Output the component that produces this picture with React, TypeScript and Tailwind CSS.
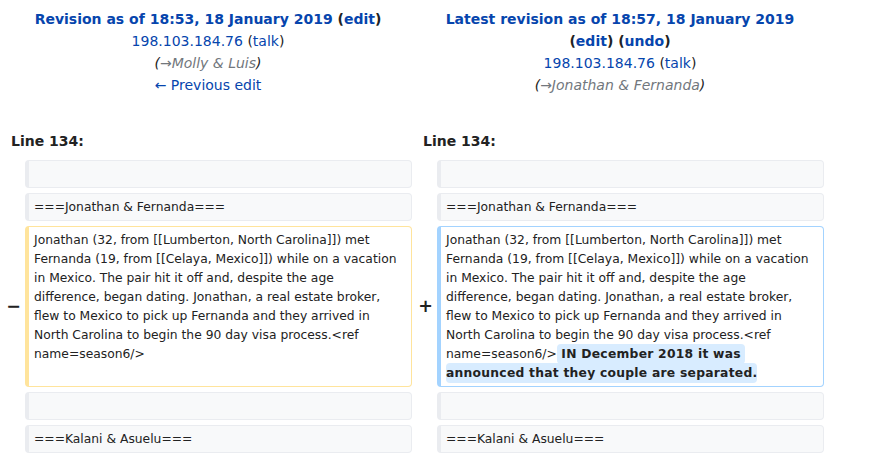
import React from 'react';

const link = 'text-[#0645ad]';

function Box({ kind, lines }: { kind: 'ctx' | 'del' | 'add'; lines: React.ReactNode[] }) {
    const styles: Record<string, string> = {
        ctx: 'bg-[#f8f9fa] border-[#eaecf0]',
        del: 'bg-white border-[#ffe49c]',
        add: 'bg-white border-[#a3d3ff]',
    };
    return (
        <div className={`border border-l-4 rounded-[4px] px-[5px] py-[3.5px] text-[12.32px] leading-[19px] text-[#222] whitespace-pre ${styles[kind]}`}>
            {lines.map((l, i) => (
                <div key={i} className="h-[19px]">{l}</div>
            ))}
        </div>
    );
}

const oldLines = [
    'Jonathan (32, from [[Lumberton, North Carolina]]) met',
    'Fernanda (19, from [[Celaya, Mexico]]) while on a vacation',
    'in Mexico. The pair hit it off and, despite the age',
    'difference, began dating. Jonathan, a real estate broker,',
    'flew to Mexico to pick up Fernanda and they arrived in',
    'North Carolina to begin the 90 day visa process.<ref',
    'name=season6/>',
];

const change = 'font-bold tracking-[0.25px] bg-[#d8ecff] rounded-[4px] py-[3px]';

const newLines: React.ReactNode[] = [
    ...oldLines.slice(0, 6),
    <>{'name=season6/>'}<span className={change}> IN December 2018 it was </span></>,
    <span className={change}>announced that they couple are separated.</span>,
];

export default function App() {
    return (
        <div className="w-[828px] text-[14px] text-[#222]" style={{ fontFamily: '"DejaVu Sans", sans-serif' }}>
            <div className="grid grid-cols-2 gap-x-[4px] px-[4px] pt-[8px] leading-[22px] text-center">
                <div>
                    <div className="font-bold">
                        <span className={link}>Revision as of 18:53, 18 January 2019</span> (<span className={link}>edit</span>)
                    </div>
                    <div>
                        <span className={link}>198.103.184.76</span> (<span className={link}>talk</span>)
                    </div>
                    <div className="italic">
                        (<span className="text-[#72777d]">→Molly &amp; Luis</span>)
                    </div>
                    <div className={link}>← Previous edit</div>
                </div>
                <div>
                    <div className="font-bold">
                        <span className={link}>Latest revision as of 18:57, 18 January 2019</span>
                    </div>
                    <div className="font-bold">
                        (<span className={link}>edit</span>) (<span className={link}>undo</span>)
                    </div>
                    <div>
                        <span className={link}>198.103.184.76</span> (<span className={link}>talk</span>)
                    </div>
                    <div className="italic">
                        (<span className="text-[#72777d]">→Jonathan &amp; Fernanda</span>)
                    </div>
                </div>
            </div>

            <div className="grid grid-cols-2 gap-x-[4px] px-[4px] mt-[34px] leading-[22px] font-bold">
                <div className="pl-[7px]">Line 134:</div>
                <div className="pl-[7px]">Line 134:</div>
            </div>

            <div className="grid grid-cols-[17px_387px_17px_387px] gap-x-[4px] gap-y-[5px] px-[4px] mt-[8px]">
                <div />
                <Box kind="ctx" lines={['']} />
                <div />
                <Box kind="ctx" lines={['']} />

                <div />
                <Box kind="ctx" lines={['===Jonathan & Fernanda===']} />
                <div />
                <Box kind="ctx" lines={['===Jonathan & Fernanda===']} />

                <div className="self-center text-right font-bold text-[17.5px] leading-[21px]">−</div>
                <Box kind="del" lines={[...oldLines, '']} />
                <div className="self-center text-right font-bold text-[17.5px] leading-[21px]">+</div>
                <Box kind="add" lines={newLines} />

                <div />
                <Box kind="ctx" lines={['']} />
                <div />
                <Box kind="ctx" lines={['']} />

                <div />
                <Box kind="ctx" lines={['===Kalani & Asuelu===']} />
                <div />
                <Box kind="ctx" lines={['===Kalani & Asuelu===']} />
            </div>
        </div>
    );
}
